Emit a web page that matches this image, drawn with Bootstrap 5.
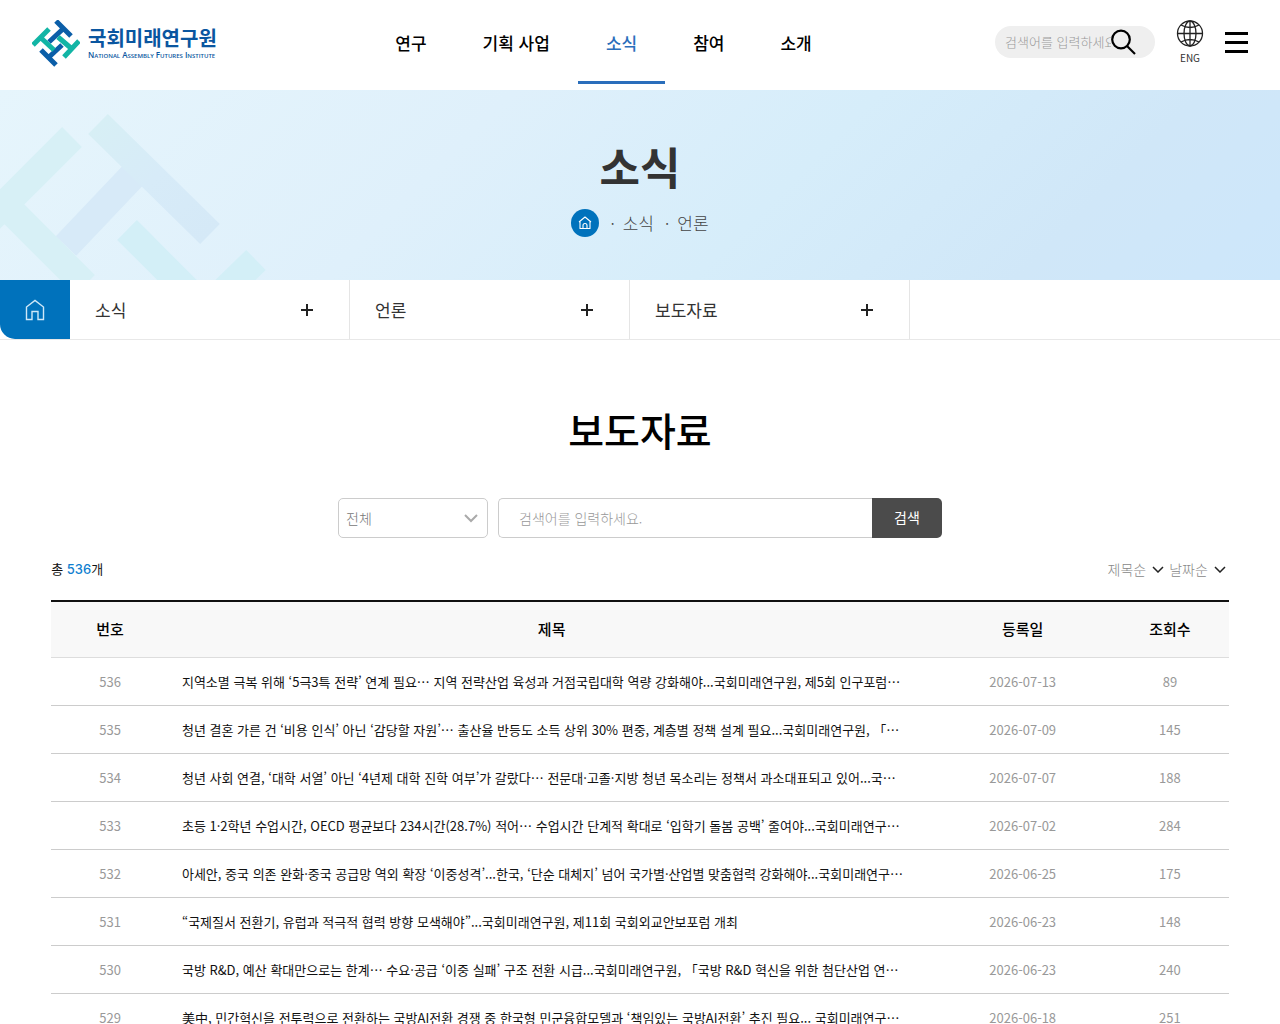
<!DOCTYPE html>
<html lang="ko">
<head>
<meta charset="utf-8">
<meta name="viewport" content="width=device-width, initial-scale=1">
<title>보도자료 - 국회미래연구원</title>
<link href="https://cdn.jsdelivr.net/npm/bootstrap@5.3.0/dist/css/bootstrap.min.css" rel="stylesheet">
<style>
  :root { --nafi-blue: #0072bc; --nafi-nav: #2a6ebb; }
  body { font-family: "Noto Sans CJK KR", sans-serif; font-size: 14px; color: #111; background: #fff; overflow-x: hidden; }
  a { color: inherit; text-decoration: none; }
  svg { display: block; flex: none; }
  .site-header { height: 90px; padding: 0 32px; }
  .side-zone { flex: 1 1 0; }
  .brand-name { font-size: 20px; line-height: 24px; font-weight: 700; color: #0a56a0; }
  .brand-sub { font-family: "Open Sans", sans-serif; font-size: 8px; line-height: 10px; font-weight: 600; color: #0a56a0; font-variant: small-caps; white-space: nowrap; }
  .brand-words { padding-bottom: 3px; }
  .main-nav { height: 84px; margin-right: 73px; }
  .main-nav a { font-size: 17px; line-height: 26px; font-weight: 500; color: #000; padding: 30px 28px 25px; border-bottom: 3px solid transparent; white-space: nowrap; }
  .main-nav a.active { color: var(--nafi-nav); border-color: var(--nafi-nav); }
  .tools { gap: 21px; padding-top: 20px; }
  .top-search { width: 160px; height: 32px; border-radius: 16px; background: #efefef; margin-top: 6px; }
  .top-search input { border: 0; background: transparent; width: 116px; min-width: 0; padding: 0 0 0 10px; font-size: 13px; font-weight: 300; }
  .top-search button, .menu-btn { border: 0; background: none; padding: 0; }
  .menu-btn { margin-top: 12px; }
  input::placeholder { color: #999 !important; opacity: 1; }
  .lang-link { font-size: 10px; line-height: 14px; color: #333; gap: 3px; }
  .hero { height: 190px; background: linear-gradient(135deg, #e6f5fc 0%, #dff0fb 35%, #d6edfa 60%, #d0e7f8 82%, #cde7fb 100%); position: relative; overflow: hidden; }
  .hero-mark { position: absolute; left: 0; top: 0; }
  .hero h1 { font-size: 44px; line-height: 60px; font-weight: 700; color: #333; margin: 0; padding-top: 46px; }
  .crumbs { font-size: 17px; line-height: 28px; color: #444; margin-top: 13px; font-weight: 300; }
  .crumb-home { width: 28px; height: 28px; border-radius: 50%; background: var(--nafi-blue); }
  .crumb-dot { margin: 0 8px 0 11px; }
  .local-nav { height: 60px; border-bottom: 1px solid #e8e8e8; }
  .local-home { width: 70px; height: 59px; background: var(--nafi-blue); border-bottom-left-radius: 15px; }
  .local-item { width: 280px; height: 59px; padding: 0 35px 0 25px; border: 0; border-right: 1px solid #e5e5e5; background: none; font-size: 17px; color: #333; }
  .page-title { font-size: 39px; line-height: 56px; font-weight: 500; color: #000; margin: 0 0 41px; padding-top: 61px; }
  .search-form { height: 40px; gap: 10px; }
  .search-form select, .search-form .keyword { height: 40px; border: 1px solid #ccc; font-size: 14px; font-weight: 300; background-color: #fff; }
  .search-form select { width: 150px; border-radius: 5px; padding: 0 7px; color: #777; appearance: none; }
  .select-box { position: relative; }
  .select-box svg { position: absolute; right: 10px; top: 15px; pointer-events: none; }
  .search-form .keyword { width: 374px; border-right: 0; border-radius: 5px 0 0 5px; padding: 0 20px; }
  .search-form .submit { width: 70px; height: 40px; border: 0; border-radius: 0 5px 5px 0; background: #4b4b4b; color: #fff; font-size: 14px; line-height: 20px; padding: 0 0 2px; }
  .board { width: 92%; margin: 0 auto; }
  .list-info { height: 62px; font-size: 13px; }
  .list-info .total b { color: #0f7fd0; font-weight: 500; font-family: Inter, sans-serif; }
  .sort-group { gap: 5px; padding-right: 3px; }
  .sort-btn { border: 0; background: none; padding: 0; gap: 6px; color: #888; font-size: 14px; font-weight: 300; }
  .press { table-layout: fixed; margin: 0; border-top: 2px solid #111; }
  .press > thead th { height: 56px; padding: 0; background: #f8f8f8; font-size: 15px; font-weight: 500; text-align: center; vertical-align: middle; border-bottom: 1px solid #ddd; color: #000; }
  .press > tbody td { height: 48px; padding: 1px 13px 0; text-align: center; vertical-align: middle; border-bottom: 1px solid #ccc; color: #999; font-size: 13px; line-height: 20px; }
  .press > tbody td.subject { text-align: left; color: #111; }
  .subject a { display: block; white-space: nowrap; overflow: hidden; }
</style>
<script src="https://cdn.jsdelivr.net/npm/bootstrap@5.3.0/dist/js/bootstrap.bundle.min.js"></script>
</head>
<body>
<header class="site-header d-flex align-items-start">
  <div class="side-zone pt-3">
    <a href="#" class="d-inline-flex align-items-center gap-2 mt-1">
      <svg width="48" height="48" viewBox="0 0 48 48" fill="none" stroke-width="5">
        <path d="M24 1L39 16M32 8L17 22" stroke="#0b5ea8"/>
        <path d="M47 21L32 37M40 29L26 17" stroke="#12b5a5"/>
        <path d="M24 45L9 30M16 38L30 25" stroke="#0b5ea8"/>
        <path d="M1 25L17 9M8 17L22 30" stroke="#12b5a5"/>
      </svg>
      <span class="brand-words"><span class="brand-name d-block">국회미래연구원</span><span class="brand-sub d-block">National Assembly Futures Institute</span></span>
    </a>
  </div>
  <nav class="main-nav d-flex" aria-label="주 메뉴">
    <a href="#">연구</a><a href="#">기획 사업</a><a href="#" class="active">소식</a><a href="#">참여</a><a href="#">소개</a>
  </nav>
  <div class="tools side-zone d-flex justify-content-end align-items-start">
    <form class="top-search d-flex align-items-center flex-shrink-0">
      <input type="text" aria-label="통합 검색어" placeholder="검색어를 입력하세요.">
      <button type="button" aria-label="통합 검색"><svg width="26" height="26" viewBox="0 0 26 26" fill="none" stroke="#000" stroke-width="2.200"><circle cx="10" cy="10.500" r="8.800"/><path d="M16 17L24 25"/></svg></button>
    </form>
    <a href="#" class="lang-link d-flex flex-column align-items-center">
      <svg width="28" height="28" viewBox="0 0 28 28" fill="none" stroke="#222" stroke-width="1.300"><circle cx="14" cy="13.500" r="12.500"/><ellipse cx="14" cy="13.500" rx="6" ry="12.500"/><path d="M14 1V26M1.500 13.500H26.500M5 5Q14 10 23 5M5 22Q14 17 23 22"/></svg>
      <span>ENG</span>
    </a>
    <button type="button" class="menu-btn" aria-label="전체 메뉴"><svg width="23" height="22" viewBox="0 0 23 22"><path d="M0 0H23V3H0zM0 9H23V12H0zM0 18H23V21H0z"/></svg></button>
  </div>
</header>

<section class="hero text-center">
  <svg class="hero-mark" width="300" height="190" viewBox="0 0 300 190" fill="none" stroke-width="28" stroke-linejoin="round">
    <defs><linearGradient id="bar" x1="0" y1="0" x2="1" y2="1"><stop offset="0" stop-color="#d7eff5"/><stop offset=".5" stop-color="#d7ebf8"/><stop offset="1" stop-color="#d5e9f7"/></linearGradient></defs>
    <path d="M140 78L66 156" stroke="#d7eaf8"/>
    <path d="M98 34L210 144" stroke="url(#bar)"/>
    <path d="M72 47L-20 139M5 115L85 195" stroke="#d7f0f6"/>
    <path d="M127 140L187 200M256 170L220 205" stroke="#d3eff7"/>
  </svg>
  <div class="position-relative">
    <h1>소식</h1>
    <div class="crumbs d-flex justify-content-center align-items-center">
      <a href="#" class="crumb-home d-flex align-items-center justify-content-center" aria-label="홈"><svg width="14" height="14" viewBox="0 0 14 14" fill="none" stroke="#fff" stroke-width="1.100" stroke-linejoin="round"><path d="M1 6L7 1L13 6M2 5.500V12.500H12V5.500M5 12.500V9.500Q5 7.500 7 7.500Q9 7.500 9 9.500V12.500"/></svg></a>
      <span class="crumb-dot">·</span><a href="#">소식</a><span class="crumb-dot">·</span><a href="#">언론</a>
    </div>
  </div>
</section>

<nav class="local-nav d-flex" aria-label="현재 위치">
  <a href="#" class="local-home d-flex align-items-center justify-content-center" aria-label="홈"><svg width="20" height="22" viewBox="0 0 20 22" fill="none" stroke="#cfe8f8" stroke-width="1.400"><path d="M1.500 8L10 1.500L18.500 8V20.500H13V12.500H7V20.500H1.500z"/></svg></a>
  <button type="button" class="local-item d-flex align-items-center justify-content-between">소식<svg width="14" height="14" viewBox="0 0 14 14" stroke="#222" stroke-width="2"><path d="M7 1V13M1 7H13"/></svg></button>
  <button type="button" class="local-item d-flex align-items-center justify-content-between">언론<svg width="14" height="14" viewBox="0 0 14 14" stroke="#222" stroke-width="2"><path d="M7 1V13M1 7H13"/></svg></button>
  <button type="button" class="local-item d-flex align-items-center justify-content-between">보도자료<svg width="14" height="14" viewBox="0 0 14 14" stroke="#222" stroke-width="2"><path d="M7 1V13M1 7H13"/></svg></button>
</nav>

<main>
  <h2 class="page-title text-center">보도자료</h2>
  <form class="search-form d-flex justify-content-center">
    <div class="select-box">
      <select aria-label="검색 구분"><option>전체</option><option>제목</option><option>내용</option></select>
      <svg width="14" height="10" viewBox="0 0 14 10" fill="none" stroke="#aaa" stroke-width="2"><path d="M1 2L7 8L13 2"/></svg>
    </div>
    <div class="d-flex">
      <input type="text" class="keyword" aria-label="검색어" placeholder="검색어를 입력하세요.">
      <button type="button" class="submit">검색</button>
    </div>
  </form>

  <div class="board">
    <div class="list-info d-flex justify-content-between align-items-center">
      <span class="total">총 <b>536</b>개</span>
      <div class="sort-group d-flex">
        <button type="button" class="sort-btn d-flex align-items-center">제목순<svg width="12" height="8" viewBox="0 0 12 8" fill="none" stroke="#222" stroke-width="1.500"><path d="M1 2L6 7L11 2"/></svg></button>
        <button type="button" class="sort-btn d-flex align-items-center">날짜순<svg width="12" height="8" viewBox="0 0 12 8" fill="none" stroke="#222" stroke-width="1.500"><path d="M1 2L6 7L11 2"/></svg></button>
      </div>
    </div>
    <table class="table press">
      <colgroup><col style="width:10%"><col style="width:65%"><col style="width:15%"><col style="width:10%"></colgroup>
      <thead><tr><th scope="col">번호</th><th scope="col">제목</th><th scope="col">등록일</th><th scope="col">조회수</th></tr></thead>
      <tbody>
        <tr><td>536</td><td class="subject"><a href="#">지역소멸 극복 위해 ‘5극3특 전략’ 연계 필요… 지역 전략산업 육성과 거점국립대학 역량 강화해야...국회미래연구원, 제5회 인구포럼…</a></td><td>2026-07-13</td><td>89</td></tr>
        <tr><td>535</td><td class="subject"><a href="#">청년 결혼 가른 건 ‘비용 인식’ 아닌 ‘감당할 자원’… 출산율 반등도 소득 상위 30% 편중, 계층별 정책 설계 필요...국회미래연구원, 「…</a></td><td>2026-07-09</td><td>145</td></tr>
        <tr><td>534</td><td class="subject"><a href="#">청년 사회 연결, ‘대학 서열’ 아닌 ‘4년제 대학 진학 여부’가 갈랐다… 전문대·고졸·지방 청년 목소리는 정책서 과소대표되고 있어...국…</a></td><td>2026-07-07</td><td>188</td></tr>
        <tr><td>533</td><td class="subject"><a href="#">초등 1·2학년 수업시간, OECD 평균보다 234시간(28.7%) 적어… 수업시간 단계적 확대로 ‘입학기 돌봄 공백’ 줄여야...국회미래연구…</a></td><td>2026-07-02</td><td>284</td></tr>
        <tr><td>532</td><td class="subject"><a href="#">아세안, 중국 의존 완화·중국 공급망 역외 확장 ‘이중성격’...한국, ‘단순 대체지’ 넘어 국가별·산업별 맞춤협력 강화해야...국회미래연구…</a></td><td>2026-06-25</td><td>175</td></tr>
        <tr><td>531</td><td class="subject"><a href="#">“국제질서 전환기, 유럽과 적극적 협력 방향 모색해야”...국회미래연구원, 제11회 국회외교안보포럼 개최</a></td><td>2026-06-23</td><td>148</td></tr>
        <tr><td>530</td><td class="subject"><a href="#">국방 R&amp;D, 예산 확대만으로는 한계… 수요·공급 ‘이중 실패’ 구조 전환 시급...국회미래연구원, 「국방 R&amp;D 혁신을 위한 첨단산업 연…</a></td><td>2026-06-23</td><td>240</td></tr>
        <tr><td>529</td><td class="subject"><a href="#">美中, 민간혁신을 전투력으로 전환하는 국방AI전환 경쟁 중 한국형 민군융합모델과 ‘책임있는 국방AI전환’ 추진 필요... 국회미래연구…</a></td><td>2026-06-18</td><td>251</td></tr>
      </tbody>
    </table>
  </div>
</main>
</body>
</html>
